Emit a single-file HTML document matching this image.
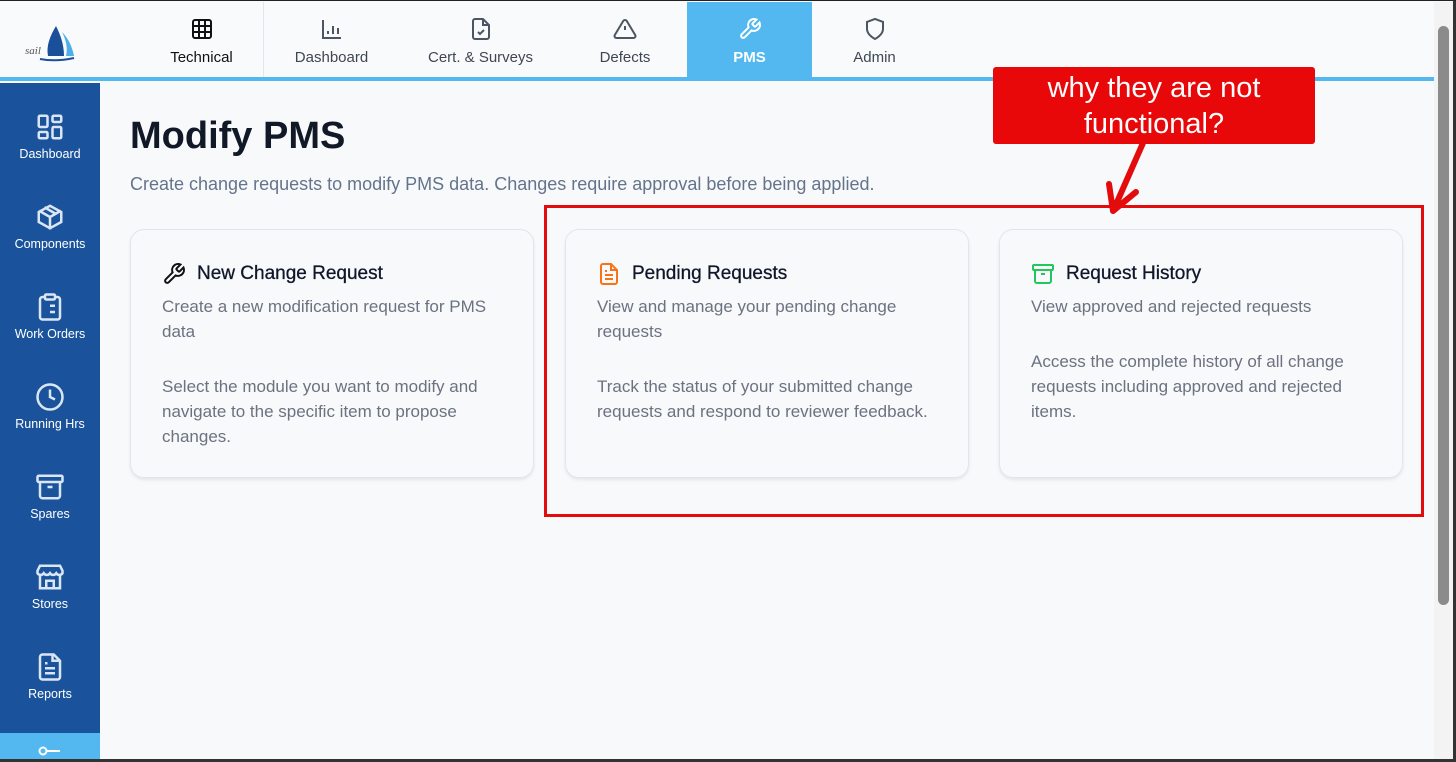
<!DOCTYPE html>
<html><head><meta charset="utf-8"><style>
*{box-sizing:border-box;margin:0;padding:0}
body{width:1456px;height:761px;overflow:hidden;background:#f8f9fb;font-family:"Liberation Sans",sans-serif;position:relative;border-top:1px solid #222;}
.top{position:absolute;left:0;top:1px;width:1434px;height:75px;background:#f9fafb;}
.bl{position:absolute;left:0;top:76px;width:1434px;height:4px;background:#53b8f0;}
.tab{position:absolute;top:0;height:75px;text-align:center;font-size:15px;color:#3f4754;}
.tab svg{position:absolute;left:50%;top:15px;margin-left:-12px}
.tab span{position:absolute;left:0;right:0;top:47px}
.side{position:absolute;left:0;top:82px;width:100px;height:679px;background:#1a539b;}
.si{position:absolute;left:0;width:100px;text-align:center;color:#fff;font-size:12.5px}
.si svg{display:block;margin:0 auto 5px}
h1{position:absolute;left:130px;top:114px;font-size:38px;font-weight:bold;color:#111827}
.sub{position:absolute;left:130px;top:173px;font-size:18px;color:#64748b}
.card{position:absolute;top:228px;width:404px;height:249px;background:#f8f9fb;border:1px solid #e2e6ec;border-radius:14px;box-shadow:0 2px 3px rgba(0,0,0,.08)}
.card h3{position:absolute;left:31px;top:33px;font-size:19px;font-weight:normal;color:#0f172a;-webkit-text-stroke:.3px #0f172a;padding-left:35px}
.card h3 svg{position:absolute;left:0;top:-1px}
.card p{position:absolute;left:31px;width:350px;font-size:17px;line-height:25px;color:#6b7280}
.rb{position:absolute;left:544px;top:204px;width:880px;height:312px;border:3px solid #e30b0b}
.call{position:absolute;left:993px;top:66px;width:322px;height:77px;background:#e8080a;border-radius:3px;color:#fff;font-size:29px;text-align:center;line-height:36px;padding-top:3px}
.sb{position:absolute;left:1434px;top:1px;width:19px;height:760px;background:#f3f3f3}
.th{position:absolute;left:1438px;top:25px;width:11px;height:579px;background:#8b8b8b;border-radius:6px}
</style></head><body>
<div class="top">
 <svg style="position:absolute;left:22px;top:22px" width="56" height="38" viewBox="0 0 56 38"><path d="M34 2 C28 12 24 22 26 32 L42 32 C42 20 38 10 34 2Z" fill="#1a4f9a"/><path d="M40 8 C44 16 46 24 44 32 L52 32 C50 22 46 14 40 8Z" fill="#4fb0e8"/><path d="M18 35 Q34 38 52 34" stroke="#1a4f9a" stroke-width="2" fill="none"/><text x="3" y="30" font-size="11" font-style="italic" fill="#555" font-family="Liberation Serif,serif">sail</text></svg>
 <div class="tab" style="left:140px;width:124px;color:#111;border-right:1px solid #e3e6ea"><svg width="24" height="24" viewBox="0 0 24 24" fill="none" stroke="#111" stroke-width="2"><rect x="3" y="3" width="18" height="18" rx="2"/><path d="M3 9h18M3 15h18M9 3v18M15 3v18"/></svg><span>Technical</span></div>
 <div class="tab" style="left:265px;width:133px"><svg width="24" height="24" viewBox="0 0 24 24" fill="none" stroke="#4b5563" stroke-width="2"><path d="M3 3v18h18M8 17v-3M13 17V9M18 17v-6"/></svg><span>Dashboard</span></div>
 <div class="tab" style="left:408px;width:145px"><svg width="24" height="24" viewBox="0 0 24 24" fill="none" stroke="#4b5563" stroke-width="2"><path d="M14 2H6a2 2 0 0 0-2 2v16a2 2 0 0 0 2 2h12a2 2 0 0 0 2-2V8z"/><path d="M14 2v6h6M9 15l2 2 4-4"/></svg><span>Cert. &amp; Surveys</span></div>
 <div class="tab" style="left:563px;width:124px"><svg width="24" height="24" viewBox="0 0 24 24" fill="none" stroke="#4b5563" stroke-width="2"><path d="M10.3 3.9 1.8 18a2 2 0 0 0 1.7 3h17a2 2 0 0 0 1.7-3L13.7 3.9a2 2 0 0 0-3.4 0zM12 9v4M12 17h.01"/></svg><span>Defects</span></div>
 <div class="tab" style="left:687px;width:125px;background:#53b8f0;color:#fff;font-weight:bold"><svg width="24" height="24" viewBox="0 0 24 24" fill="none" stroke="#fff" stroke-width="2"><path d="M14.7 6.3a1 1 0 0 0 0 1.4l1.6 1.6a1 1 0 0 0 1.4 0l3.8-3.8a6 6 0 0 1-7.9 7.9l-6.9 6.9a2.1 2.1 0 0 1-3-3l6.9-6.9a6 6 0 0 1 7.9-7.9z"/></svg><span>PMS</span></div>
 <div class="tab" style="left:812px;width:125px"><svg width="24" height="24" viewBox="0 0 24 24" fill="none" stroke="#4b5563" stroke-width="2"><path d="M12 22s8-4 8-10V5l-8-3-8 3v7c0 6 8 10 8 10z"/></svg><span>Admin</span></div>
</div>
<div class="bl"></div>
<div class="side">
 <div class="si" style="top:29px"><svg width="30" height="30" viewBox="0 0 24 24" fill="none" stroke="#dbe6f5" stroke-width="2"><rect x="3" y="3" width="7" height="9" rx="1"/><rect x="14" y="3" width="7" height="5" rx="1"/><rect x="14" y="12" width="7" height="9" rx="1"/><rect x="3" y="16" width="7" height="5" rx="1"/></svg>Dashboard</div>
 <div class="si" style="top:119px"><svg width="30" height="30" viewBox="0 0 24 24" fill="none" stroke="#dbe6f5" stroke-width="2"><path d="M21 16V8l-9-5-9 5v8l9 5 9-5zM3.3 7 12 12l8.7-5M12 22V12M7.5 4.2l9 5.2"/></svg>Components</div>
 <div class="si" style="top:209px"><svg width="30" height="30" viewBox="0 0 24 24" fill="none" stroke="#dbe6f5" stroke-width="2"><rect x="8" y="2" width="8" height="4" rx="1"/><path d="M16 4h2a2 2 0 0 1 2 2v14a2 2 0 0 1-2 2H6a2 2 0 0 1-2-2V6a2 2 0 0 1 2-2h2M12 11h4M12 16h4M8 11h.01M8 16h.01"/></svg>Work Orders</div>
 <div class="si" style="top:299px"><svg width="30" height="30" viewBox="0 0 24 24" fill="none" stroke="#dbe6f5" stroke-width="2"><circle cx="12" cy="12" r="10"/><path d="M12 6v6l4 2"/></svg>Running Hrs</div>
 <div class="si" style="top:389px"><svg width="30" height="30" viewBox="0 0 24 24" fill="none" stroke="#dbe6f5" stroke-width="2"><rect x="2" y="3" width="20" height="5" rx="1"/><path d="M4 8v11a2 2 0 0 0 2 2h12a2 2 0 0 0 2-2V8M10 12h4"/></svg>Spares</div>
 <div class="si" style="top:479px"><svg width="30" height="30" viewBox="0 0 24 24" fill="none" stroke="#dbe6f5" stroke-width="2"><path d="M2 7l2-4h16l2 4v2a3 3 0 0 1-5 0 3 3 0 0 1-5 0 3 3 0 0 1-5 0 3 3 0 0 1-5 0zM4 11v10h16V11M9 21v-6h6v6"/></svg>Stores</div>
 <div class="si" style="top:569px"><svg width="30" height="30" viewBox="0 0 24 24" fill="none" stroke="#dbe6f5" stroke-width="2"><path d="M15 2H6a2 2 0 0 0-2 2v16a2 2 0 0 0 2 2h12a2 2 0 0 0 2-2V7z"/><path d="M14 2v5h5M16 13H8M16 17H8M10 9H8"/></svg>Reports</div>
 <div style="position:absolute;top:650px;left:0;width:100px;height:29px;background:#53b8f0"><svg style="position:absolute;left:38px;top:12px" width="24" height="12" viewBox="0 0 24 12" fill="none" stroke="#fff" stroke-width="2"><circle cx="5" cy="6" r="3.5"/><path d="M9 6h13"/></svg></div>
</div>
<h1>Modify PMS</h1>
<div class="sub">Create change requests to modify PMS data. Changes require approval before being applied.</div>
<div class="card" style="left:130px"><h3><svg width="24" height="24" viewBox="0 0 24 24" fill="none" stroke="#111" stroke-width="2"><path d="M14.7 6.3a1 1 0 0 0 0 1.4l1.6 1.6a1 1 0 0 0 1.4 0l3.8-3.8a6 6 0 0 1-7.9 7.9l-6.9 6.9a2.1 2.1 0 0 1-3-3l6.9-6.9a6 6 0 0 1 7.9-7.9z"/></svg>New Change Request</h3>
<p style="top:64px">Create a new modification request for PMS data</p>
<p style="top:144px">Select the module you want to modify and navigate to the specific item to propose changes.</p></div>
<div class="card" style="left:565px"><h3><svg width="24" height="24" viewBox="0 0 24 24" fill="none" stroke="#f97316" stroke-width="2"><path d="M14 2H6a2 2 0 0 0-2 2v16a2 2 0 0 0 2 2h12a2 2 0 0 0 2-2V8z"/><path d="M14 2v6h6M16 13H8M16 17H8M10 9H8"/></svg>Pending Requests</h3>
<p style="top:64px">View and manage your pending change requests</p>
<p style="top:144px">Track the status of your submitted change requests and respond to reviewer feedback.</p></div>
<div class="card" style="left:999px"><h3><svg width="24" height="24" viewBox="0 0 24 24" fill="none" stroke="#22c55e" stroke-width="2"><rect x="2" y="3" width="20" height="5" rx="1"/><path d="M4 8v11a2 2 0 0 0 2 2h12a2 2 0 0 0 2-2V8M10 12h4"/></svg>Request History</h3>
<p style="top:64px">View approved and rejected requests</p>
<p style="top:119px">Access the complete history of all change requests including approved and rejected items.</p></div>
<div class="rb"></div>
<div class="call">why they are not<br>functional?</div>
<svg style="position:absolute;left:1100px;top:140px" width="50" height="75" viewBox="0 0 50 75"><path d="M43 2 L14 68" stroke="#e30b0b" stroke-width="6" fill="none"/><path d="M9 43 L13 70 L36 51" stroke="#e30b0b" stroke-width="6" fill="none" stroke-linejoin="round" stroke-linecap="round"/></svg>
<div class="sb"></div><div class="th"></div>
<div style="position:absolute;left:1453px;top:0;width:3px;height:761px;background:#333"></div>
<div style="position:absolute;left:0;top:758px;width:1456px;height:3px;background:#333"></div>
</body></html>
